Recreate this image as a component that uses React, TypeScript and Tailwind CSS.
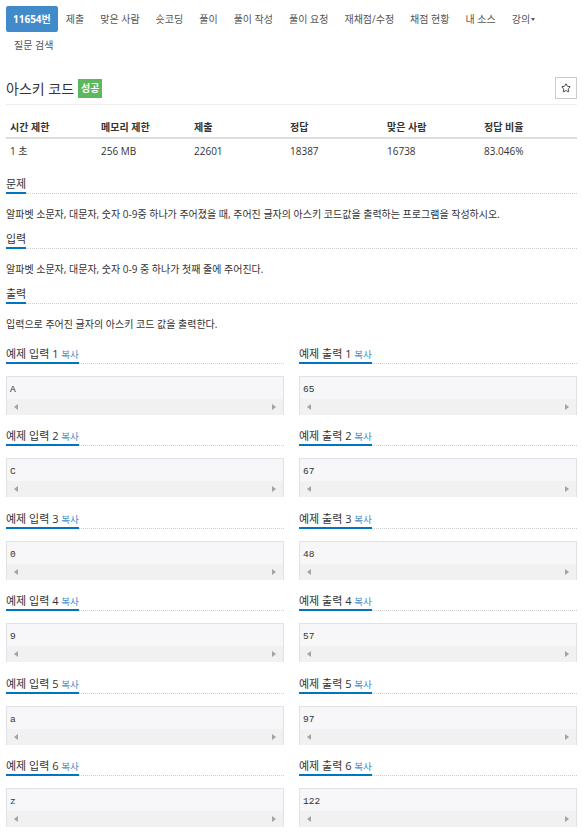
import { Star } from 'lucide-react';

const navItems = ['제출', '맞은 사람', '숏코딩', '풀이', '풀이 작성', '풀이 요청', '재채점/수정', '채점 현황', '내 소스'];

const stats = [
  ['시간 제한', '1 초'],
  ['메모리 제한', '256 MB'],
  ['제출', '22601'],
  ['정답', '18387'],
  ['맞은 사람', '16738'],
  ['정답 비율', '83.046%'],
];

const examples = [
  ['A', '65'],
  ['C', '67'],
  ['0', '48'],
  ['9', '57'],
  ['a', '97'],
  ['z', '122'],
];

function SectionTitle({ children }: { children: React.ReactNode }) {
  return (
    <div className="flex border-b border-dotted border-[#cfcfcf]">
      <div className="-mb-px h-[20px] whitespace-nowrap border-b-2 border-[#0076c0] pt-[2px] text-[11px] leading-4 text-[#333]">
        {children}
      </div>
    </div>
  );
}

function SampleBox({ label, n, value }: { label: string; n: number; value: string }) {
  return (
    <div className="mt-[11.5px]">
      <SectionTitle>
        {label} {n} <span className="text-[9.5px] leading-none text-[#428bca]">복사</span>
      </SectionTitle>
      <div className="mt-[12px] border-x border-t border-[#e1e1e8] bg-[#f7f7f9]">
        <div className="h-[22px] px-[3px] pt-[7px] font-['Liberation_Mono',monospace] text-[9.5px] leading-3 text-[#333]">
          {value}
        </div>
        <div className="flex h-4 items-center justify-between bg-[#f1f1f1] px-[7px]">
          <span className="h-0 w-0 border-y-[3.5px] border-r-[4px] border-y-transparent border-r-[#a3a3a3]" />
          <span className="h-0 w-0 border-y-[3.5px] border-l-[4px] border-y-transparent border-l-[#a3a3a3]" />
        </div>
      </div>
    </div>
  );
}

export default function App() {
  return (
    <div className="min-h-[835px] bg-white px-[6px] pt-[6px] font-['Open_Sans','Noto_Sans_CJK_KR',sans-serif] text-[10px] text-[#333]">
      <div className="flex max-w-[570px] flex-wrap text-[#555]">
        <div className="flex h-[26px] items-center rounded-[2px] bg-[#428bca] px-[7px] font-bold text-white">11654번</div>
        {navItems.map((item) => (
          <div key={item} className="flex h-[26px] items-center px-2">
            {item}
          </div>
        ))}
        <div className="flex h-[26px] items-center px-2">
          강의
          <span className="ml-px h-0 w-0 border-x-[2.5px] border-t-[3px] border-x-transparent border-t-[#555]" />
        </div>
        <div className="flex h-[26px] w-full items-center px-2">질문 검색</div>
      </div>

      <div className="mt-[18px] flex items-center justify-between border-b border-[#eee] pb-[4px]">
        <div className="flex h-[24px] items-center gap-[4px]">
          <span className="text-[14px] text-[#333]">아스키 코드</span>
          <span className="flex h-[19px] items-center bg-[#5cb85c] px-[3px] text-[10px] font-bold text-white">성공</span>
        </div>
        <div className="flex h-[22px] w-[22px] items-center justify-center border border-[#ccc]">
          <Star size={10} strokeWidth={2.2} color="#333" />
        </div>
      </div>

      <div className="mt-[13px]">
        <div className="grid h-[21px] grid-cols-[91px_93px_96px_97px_97px_1fr] items-center border-b-2 border-[#ddd] font-bold">
          {stats.map(([h]) => (
            <div key={h} className="px-1">
              {h}
            </div>
          ))}
        </div>
        <div className="grid h-[24px] grid-cols-[91px_93px_96px_97px_97px_1fr] items-center">
          {stats.map(([h, v]) => (
            <div key={h} className="px-1">
              {v}
            </div>
          ))}
        </div>
      </div>

      <div className="mt-[11px]">
        <SectionTitle>문제</SectionTitle>
        <p className="mt-[12px] leading-4">
          알파벳 소문자, 대문자, 숫자 0-9중 하나가 주어졌을 때, 주어진 글자의 아스키 코드값을 출력하는 프로그램을 작성하시오.
        </p>
      </div>
      <div className="mt-[7px]">
        <SectionTitle>입력</SectionTitle>
        <p className="mt-[12px] leading-4">알파벳 소문자, 대문자, 숫자 0-9 중 하나가 첫째 줄에 주어진다.</p>
      </div>
      <div className="mt-[7px]">
        <SectionTitle>출력</SectionTitle>
        <p className="mt-[12px] leading-4">입력으로 주어진 글자의 아스키 코드 값을 출력한다.</p>
      </div>

      <div className="grid grid-cols-2 gap-x-[15px]">
        {examples.map(([inp, out], i) => (
          <>
            <SampleBox key={`i${i}`} label="예제 입력" n={i + 1} value={inp} />
            <SampleBox key={`o${i}`} label="예제 출력" n={i + 1} value={out} />
          </>
        ))}
      </div>
    </div>
  );
}
